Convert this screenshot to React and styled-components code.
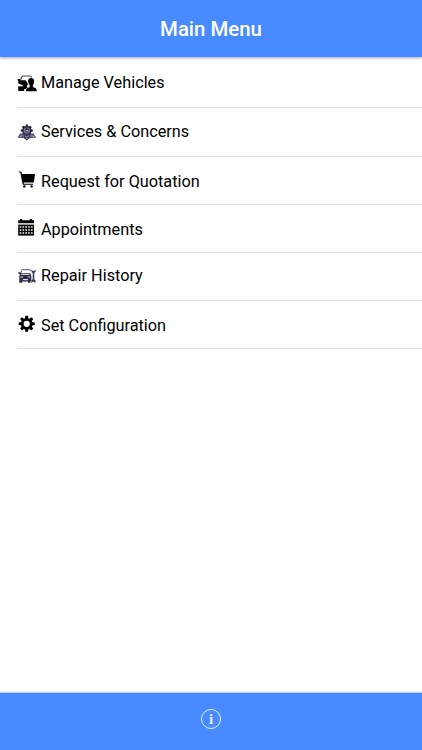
import React from "react";
import styled, { createGlobalStyle } from "styled-components";

const TEETH = [0, 45, 90, 135, 180, 225, 270, 315];

const VehiclesIcon = () => (
  <Icon viewBox="0 0 20 20">
    <path d="M3.6 5.8L4.8 3Q5.3 2 6.6 2H12.6Q13.9 2 14.6 3.6" fill="none" stroke="#44444c" strokeWidth="1.2" />
    <path d="M.3 4.9L2.8 4.9L3.6 6.3H8.4L10.2 8.2L10.9 10.5L9.8 12L10.5 13.4L8.8 15H7.2V17H1.2V12.2L5.4 12.5L5.8 11.3L1.2 9.6L1.4 7.2Z" />
    <path d="M14.1 3.9C16.2 3.9 17.4 5.3 17.2 7.3C17.1 9.2 16.4 10.5 15.9 11.2V13L18.5 14.1Q19.8 14.8 19.8 17.3H8.8Q9 14.8 10.2 14.2L12.7 13V11.2C12 10.4 11.2 9 11.1 7.3C10.9 5.3 12 3.9 14.1 3.9Z" />
  </Icon>
);

const ServicesIcon = () => (
  <Icon viewBox="0 0 20 20">
    <circle cx="9.8" cy="8.6" r="3.9" fill="#8c8ca6" stroke="#22223e" strokeWidth="1.5" />
    {TEETH.map((angle) => (
      <path key={angle} d="M8.5 4.6L8.8 2.6H10.8L11.1 4.6Z" fill="#22223e" transform={`rotate(${angle} 9.8 8.6)`} />
    ))}
    <path d="M7.6 7.8Q7.8 6.2 9.8 6.1Q11.8 6.2 12 7.8L11.5 10.6H8.1Z" fill="#3c3c5a" />
    <path d="M8.4 8.7H11.2" stroke="#c7c7d6" strokeWidth=".9" />
    <path d="M3.4 11L6.2 12.2L8 16.2L.3 15.8Z" fill="#5a5a74" />
    <path d="M16.2 11L13.4 12.2L11.6 16.2L19.3 15.8Z" fill="#5a5a74" />
    <path d="M6.6 12.6L9.8 11.8L13 12.6L12.3 16.4L9.8 18.5L7.3 16.4Z" fill="#363656" />
    <path d="M2.6 14.7L5.3 13.7M17 14.7L14.3 13.7M7.9 13.8L9.8 14.9L11.8 13.8M8.8 16.6H10.8" fill="none" stroke="#b8b8cc" strokeWidth=".8" />
  </Icon>
);

const CartIcon = () => (
  <Icon viewBox="0 0 20 20">
    <path d="M1.9 1.4H4.2L5 4H18L16.9 12.6H6.6L6.8 13.7H16V14.8H5.7L3.3 2.6H1.9Z" />
    <circle cx="7.4" cy="16.4" r="1.2" />
    <circle cx="14.6" cy="16.4" r="1.2" />
  </Icon>
);

const CalendarIcon = () => (
  <Icon viewBox="0 0 20 20">
    <path d="M1.2 2.2H3V1H5.2V2.2H12.8V1H15V2.2H17V5H1.2Z" />
    <path d="M1.2 5H17V7H1.2Z" fill="#bcc6c2" />
    <path d="M1.2 6.8H17V17.6H1.2Z" />
    <path
      d="M2.6 9.1H15.9M2.6 12.1H15.9M2.6 15.1H15.9"
      stroke="#eee"
      strokeWidth="1.5"
      strokeDasharray="1.7 1.15"
    />
  </Icon>
);

const RepairIcon = () => (
  <Icon viewBox="0 0 20 20">
    <path d="M3.8 7.2L4.9 4.2Q5.1 3.6 6 3.6H12.3Q13.4 3.7 13.9 5" fill="none" stroke="#777790" strokeWidth="1.1" />
    <path d="M1.3 6.3H3.3L3.7 7.3H13.4L14.3 10V15H13.5V16.8H11V15.6H5.2V16.8H2.3V10L3 8.3L1.3 7.6Z" fill="#29294a" />
    <path d="M4.3 8.5H12.5M3.3 11H6.2M10.6 11H13.2M5.8 13.7H11" stroke="#d4d4e0" strokeWidth="1.2" />
    <path d="M14.5 3.3V5.7L15.7 7V13.2L14.3 14.8V17L16 15.8H17L18.6 17V14.8L17.3 13.2V7L18.6 5.7V3.3L17.3 4.9H15.8Z" fill="#36365a" />
  </Icon>
);

const GearIcon = () => (
  <Icon viewBox="0 0 20 20">
    <circle cx="9.7" cy="9.8" r="4.5" fill="none" stroke="#000" strokeWidth="2.8" />
    {TEETH.map((angle) => (
      <path key={angle} d="M7.9 4.7L8.4 1.8H11L11.5 4.7Z" transform={`rotate(${angle} 9.7 9.8)`} />
    ))}
  </Icon>
);

const items = [
  { label: "Manage Vehicles", icon: VehiclesIcon, height: 51, iconTop: 17, textTop: 16 },
  { label: "Services & Concerns", icon: ServicesIcon, height: 49, iconTop: 14, textTop: 14 },
  { label: "Request for Quotation", icon: CartIcon, height: 48, iconTop: 13, textTop: 15 },
  { label: "Appointments", icon: CalendarIcon, height: 48, iconTop: 13, textTop: 15 },
  { label: "Repair History", icon: RepairIcon, height: 48, iconTop: 13, textTop: 13 },
  { label: "Set Configuration", icon: GearIcon, height: 48, iconTop: 13, textTop: 15 },
];

const App = () => {
  return (
    <Page>
      <GlobalStyle />
      <Header>
        <Title>Main Menu</Title>
      </Header>
      <Menu>
        {items.map(({ label, icon: ItemIcon, height, iconTop, textTop }) => (
          <MenuItem key={label} $height={height}>
            <IconHolder $top={iconTop}>
              <ItemIcon />
            </IconHolder>
            <Label $top={textTop}>{label}</Label>
          </MenuItem>
        ))}
      </Menu>
      <Footer>
        <InfoButton aria-label="Information">i</InfoButton>
      </Footer>
    </Page>
  );
};

const GlobalStyle = createGlobalStyle`
  body {
    margin: 0;
    background: #fff;
    font-family: Roboto, sans-serif;
  }
`;

const Page = styled.div`
  display: flex;
  flex-direction: column;
  height: 750px;
  overflow: hidden;
`;

const Header = styled.header`
  display: flex;
  flex-shrink: 0;
  justify-content: center;
  align-items: center;
  height: 57px;
  background: #488aff;
  box-shadow: 0 1px 3px rgba(0, 0, 0, 0.35);
`;

const Title = styled.h1`
  margin: 0;
  color: #fff;
  font-size: 20.4px;
  font-weight: 500;
  line-height: 24px;
`;

const Menu = styled.ul`
  flex: 1;
  margin: 0;
  padding: 0 0 0 17px;
  list-style: none;
`;

const MenuItem = styled.li`
  display: flex;
  align-items: flex-start;
  gap: 4px;
  box-sizing: border-box;
  height: ${({ $height }) => $height}px;
  border-bottom: 1px solid #dedede;
`;

const IconHolder = styled.span`
  display: flex;
  padding-top: ${({ $top }) => $top}px;
`;

const Icon = styled.svg`
  width: 20px;
  height: 20px;
`;

const Label = styled.span`
  padding-top: ${({ $top }) => $top}px;
  color: #000;
  font-size: 16.25px;
  line-height: 20px;
`;

const Footer = styled.footer`
  display: flex;
  flex-shrink: 0;
  justify-content: center;
  align-items: center;
  box-sizing: border-box;
  height: 57px;
  padding-bottom: 5px;
  background: #488aff;
  box-shadow: 0 -1px 1px rgba(72, 138, 255, 0.4);
`;

const InfoButton = styled.button`
  display: flex;
  justify-content: center;
  align-items: center;
  box-sizing: border-box;
  width: 20px;
  height: 20px;
  padding: 0;
  border: 1px solid #e4eeff;
  border-radius: 50%;
  background: none;
  color: #e4eeff;
  font-family: "Liberation Serif", serif;
  font-size: 15px;
  font-weight: bold;
  line-height: 18px;
`;

export default App;
